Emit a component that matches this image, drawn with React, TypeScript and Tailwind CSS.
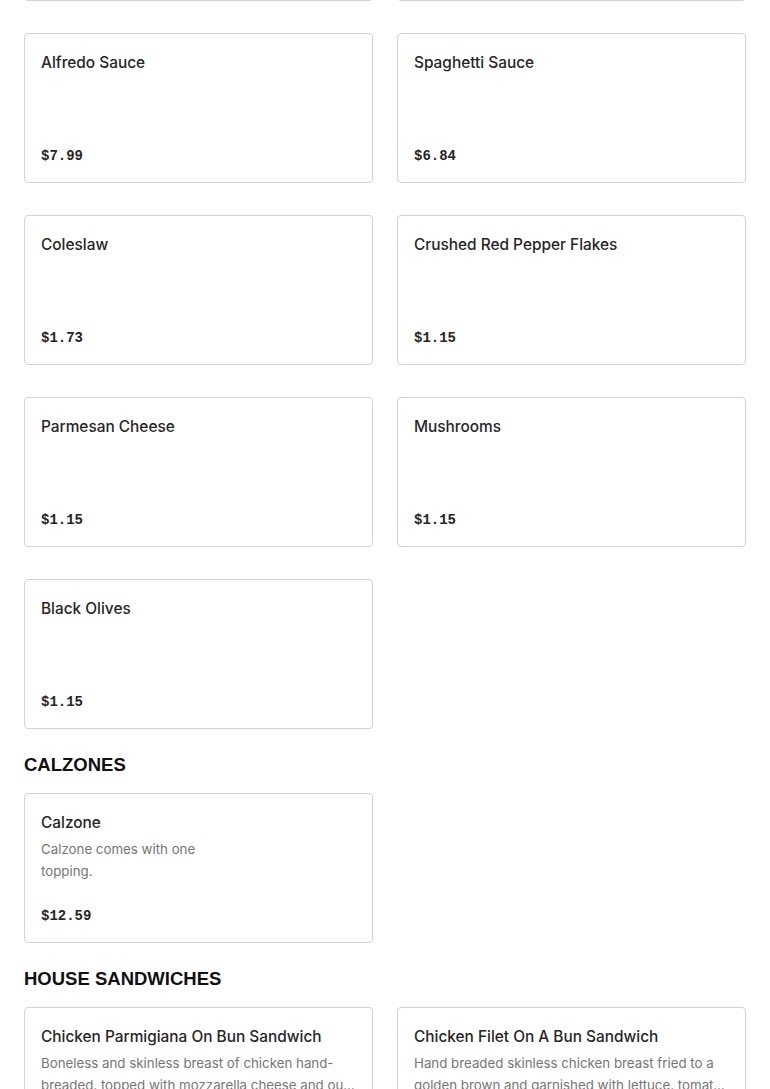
import React from "react";

type Item = {
  name: string;
  price: string;
  description?: string;
  hasImage?: boolean;
};

const sides: Item[] = [
  { name: "Alfredo Sauce", price: "$7.99" },
  { name: "Spaghetti Sauce", price: "$6.84" },
  { name: "Coleslaw", price: "$1.73" },
  { name: "Crushed Red Pepper Flakes", price: "$1.15" },
  { name: "Parmesan Cheese", price: "$1.15" },
  { name: "Mushrooms", price: "$1.15" },
  { name: "Black Olives", price: "$1.15" },
];

const calzones: Item[] = [
  {
    name: "Calzone",
    description: "Calzone comes with one topping.",
    price: "$12.59",
    hasImage: true,
  },
];

const sandwiches: Item[] = [
  {
    name: "Chicken Parmigiana On Bun Sandwich",
    description:
      "Boneless and skinless breast of chicken hand-breaded, topped with mozzarella cheese and our homemade marinara sauce.",
    price: "$10.49",
  },
  {
    name: "Chicken Filet On A Bun Sandwich",
    description:
      "Hand breaded skinless chicken breast fried to a golden brown and garnished with lettuce, tomato and mayo.",
    price: "$9.99",
  },
];

const MenuCard = ({ item }: { item: Item }) => {
  return (
    <div className="flex h-[150px] rounded-[4px] border border-[#d3d3d3] bg-white">
      <div className="flex min-w-0 flex-1 flex-col px-4 pt-[17px] pb-4">
        <h3 className="text-[15.4px] leading-6 font-medium text-[#262626] [font-family:Inter,'Liberation_Sans',sans-serif]">
          {item.name}
        </h3>
        {item.description && (
          <p
            className={`mt-[3px] line-clamp-2 text-[13.3px] leading-[22px] text-[#767676] [font-family:Inter,'Liberation_Sans',sans-serif] ${
              item.hasImage ? "max-w-[190px]" : ""
            }`}
          >
            {item.description}
          </p>
        )}
        <span className="mt-auto text-[14px] leading-5 font-bold text-[#262626] [font-family:'Liberation_Mono',monospace]">
          {item.price}
        </span>
      </div>
    </div>
  );
};

const SectionTitle = ({ title }: { title: string }) => (
  <h2 className="mt-6 mb-4 text-[18.5px] leading-6 font-black uppercase text-[#111] [font-family:'Liberation_Sans',Arial,sans-serif]">
    {title}
  </h2>
);

export default function App() {
  return (
    <div className="h-[1089px] overflow-hidden bg-white">
      <div className="-mt-[149px] px-6">
        <div className="grid grid-cols-2 gap-x-6 gap-y-8">
          {/* previous row, scrolled above the fold */}
          <div className="h-[150px] rounded-[4px] border border-[#d3d3d3]" />
          <div className="h-[150px] rounded-[4px] border border-[#d3d3d3]" />
          {sides.map((item) => (
            <MenuCard key={item.name} item={item} />
          ))}
        </div>

        <SectionTitle title="Calzones" />
        <div className="grid grid-cols-2 gap-x-6 gap-y-8">
          {calzones.map((item) => (
            <MenuCard key={item.name} item={item} />
          ))}
        </div>

        <SectionTitle title="House Sandwiches" />
        <div className="grid grid-cols-2 gap-x-6 gap-y-8">
          {sandwiches.map((item) => (
            <MenuCard key={item.name} item={item} />
          ))}
        </div>
      </div>
    </div>
  );
}
